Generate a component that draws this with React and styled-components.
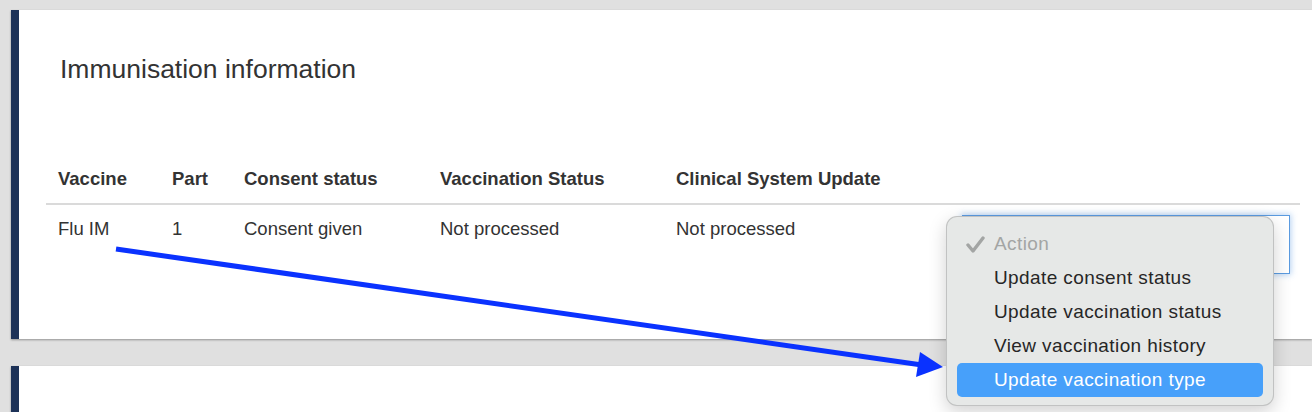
import React from 'react';
import styled, { createGlobalStyle } from 'styled-components';

const colors = {
  pageBg: '#e0e0e0',
  navy: '#1d3258',
  text: '#333',
  rule: '#dadada',
  focus: '#5b9be0',
  menuBg: '#e6e8e7',
  menuText: '#262626',
  menuMuted: '#a3a5a4',
  highlight: '#47a0fa',
  arrow: '#0a32ff',
};

const GlobalStyle = createGlobalStyle`
  html, body {
    margin: 0;
    padding: 0;
    background: ${colors.pageBg};
    overflow: hidden;
  }
`;

const Page = styled.div`
  position: relative;
  width: 1312px;
  height: 412px;
  overflow: hidden;
  padding: 10px 0 0 11px;
  box-sizing: border-box;
  font-family: 'Liberation Sans', Arial, Helvetica, sans-serif;
  color: ${colors.text};
`;

const Card = styled.section`
  background: #fff;
  border-left: 8px solid ${colors.navy};
  height: ${(p) => p.$height}px;
  box-sizing: border-box;
  padding: 43px 12px 0 27px;
  box-shadow: 0 1px 2px rgba(0, 0, 0, 0.35);
  margin-bottom: 27px;
`;

const Title = styled.h2`
  margin: 0 0 0 14px;
  font-size: 26.5px;
  line-height: 32px;
  font-weight: 400;
  color: ${colors.text};
`;

const Grid = styled.div`
  display: grid;
  grid-template-columns: 114px 72px 196px 236px 286px 1fr;
  margin-top: 71px;
`;

const HeadCell = styled.div`
  padding: 12px 12px 13px;
  font-size: 18.5px;
  line-height: 22px;
  font-weight: 700;
  border-bottom: 2px solid ${colors.rule};
  white-space: nowrap;
`;

const Cell = styled.div`
  padding: 13px 12px 0;
  font-size: 18.5px;
  line-height: 22px;
  white-space: nowrap;
`;

const SelectCell = styled.div`
  padding: 10px 10px 0 12px;
`;

const SelectBox = styled.div`
  position: relative;
  height: 59px;
  box-sizing: border-box;
  border: 1px solid ${colors.focus};
  background: #fff;
  box-shadow: 0 0 6px 1px rgba(74, 144, 226, 0.4);
`;

const Menu = styled.ul`
  position: absolute;
  left: -17px;
  top: 0;
  width: 328px;
  height: 190px;
  box-sizing: border-box;
  margin: 0;
  padding: 10px 10px;
  list-style: none;
  background: ${colors.menuBg};
  border: 1px solid rgba(0, 0, 0, 0.16);
  border-radius: 11px;
  box-shadow: 0 6px 18px rgba(0, 0, 0, 0.18);
  z-index: 2;
`;

const MenuItem = styled.li`
  display: flex;
  align-items: center;
  height: 34px;
  padding-left: 9px;
  border-radius: 5px;
  font-size: 19px;
  letter-spacing: 0.4px;
  color: ${(p) => (p.$active ? '#fff' : p.$muted ? colors.menuMuted : colors.menuText)};
  background: ${(p) => (p.$active ? colors.highlight : 'transparent')};
`;

const CheckSlot = styled.span`
  display: inline-flex;
  width: 28px;
  flex: none;
`;

const ArrowLayer = styled.svg`
  position: absolute;
  left: 0;
  top: 0;
  pointer-events: none;
  z-index: 3;
`;

const Check = () => (
  <svg width="19" height="17" viewBox="0 0 19 17">
    <path d="M2 9 L7 15 L17 2" fill="none" stroke={colors.menuMuted} strokeWidth="3.4" strokeLinecap="round" strokeLinejoin="round" />
  </svg>
);

const headers = ['Vaccine', 'Part', 'Consent status', 'Vaccination Status', 'Clinical System Update', ''];
const row = ['Flu IM', '1', 'Consent given', 'Not processed', 'Not processed'];
const actions = ['Update consent status', 'Update vaccination status', 'View vaccination history', 'Update vaccination type'];

export default function App() {
  return (
    <Page>
      <GlobalStyle />
      <Card $height={329}>
        <Title>Immunisation information</Title>
        <Grid>
          {headers.map((h, i) => (
            <HeadCell key={i}>{h}</HeadCell>
          ))}
          {row.map((c, i) => (
            <Cell key={i}>{c}</Cell>
          ))}
          <SelectCell>
            <SelectBox>
              <Menu>
                <MenuItem $muted>
                  <CheckSlot>
                    <Check />
                  </CheckSlot>
                  Action
                </MenuItem>
                {actions.map((a, i) => (
                  <MenuItem key={a} $active={i === actions.length - 1}>
                    <CheckSlot />
                    {a}
                  </MenuItem>
                ))}
              </Menu>
            </SelectBox>
          </SelectCell>
        </Grid>
      </Card>
      <Card $height={120} />
      <ArrowLayer width="1312" height="412" viewBox="0 0 1312 412">
        <line x1="116" y1="249" x2="922" y2="365" stroke={colors.arrow} strokeWidth="5" />
        <polygon points="920,352 943,367 916,377" fill={colors.arrow} />
      </ArrowLayer>
    </Page>
  );
}
